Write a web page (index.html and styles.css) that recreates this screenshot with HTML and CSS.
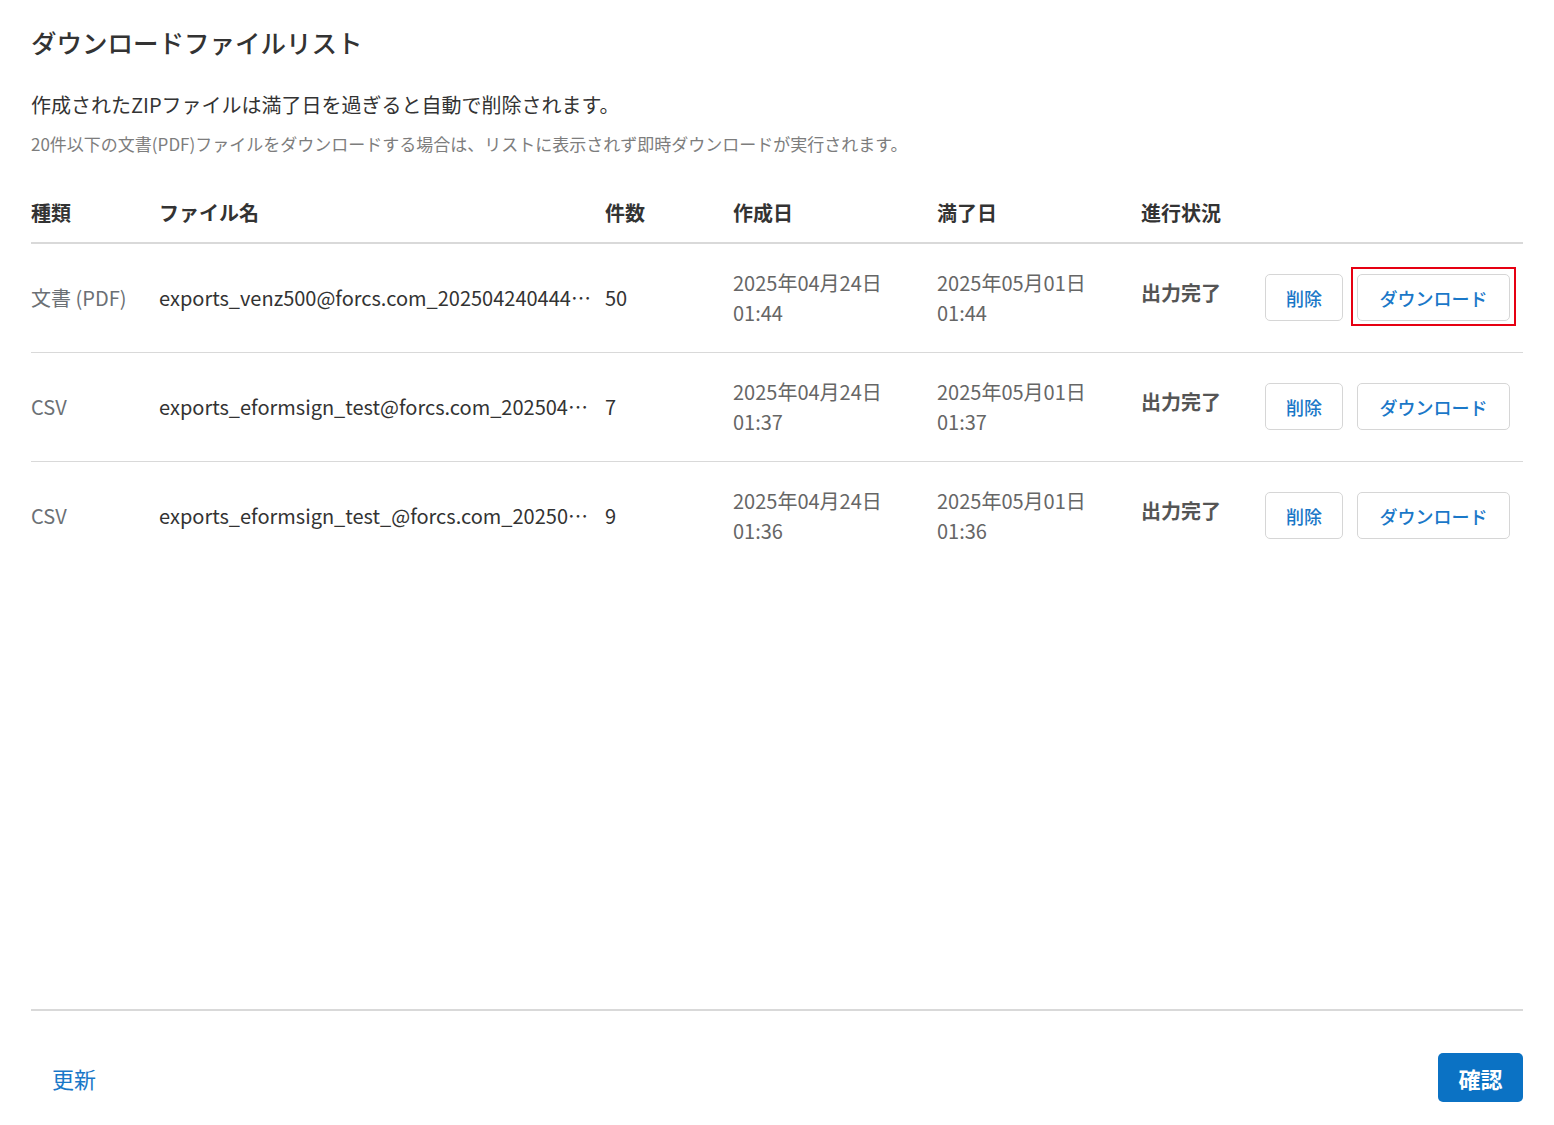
FILE: index.html
```html
<!DOCTYPE html>
<html lang="ja">
<head>
<meta charset="utf-8">
<title>ダウンロードファイルリスト</title>
<link rel="stylesheet" href="styles.css">
</head>
<body>
<div class="page">
  <div class="content">
    <h1 class="title">ダウンロードファイルリスト</h1>
    <p class="desc">作成されたZIPファイルは満了日を過ぎると自動で削除されます。</p>
    <p class="note">20件以下の文書(PDF)ファイルをダウンロードする場合は、リストに表示されず即時ダウンロードが実行されます。</p>
    <table class="list">
      <colgroup>
        <col class="c-type"><col class="c-name"><col class="c-count"><col class="c-date"><col class="c-date"><col class="c-status"><col class="c-act">
      </colgroup>
      <thead>
        <tr><th>種類</th><th>ファイル名</th><th>件数</th><th>作成日</th><th>満了日</th><th>進行状況</th><th></th></tr>
      </thead>
      <tbody>
        <tr>
          <td class="type">文書 (PDF)</td>
          <td class="name">exports_venz500@forcs.com_202504240444…</td>
          <td class="count">50</td>
          <td class="date">2025年04月24日<br>01:44</td>
          <td class="date">2025年05月01日<br>01:44</td>
          <td class="status">出力完了</td>
          <td class="act"><div class="btns"><button class="btn">削除</button><button class="btn dl focus">ダウンロード</button></div></td>
        </tr>
        <tr>
          <td class="type">CSV</td>
          <td class="name">exports_eformsign_test@forcs.com_202504…</td>
          <td class="count">7</td>
          <td class="date">2025年04月24日<br>01:37</td>
          <td class="date">2025年05月01日<br>01:37</td>
          <td class="status">出力完了</td>
          <td class="act"><div class="btns"><button class="btn">削除</button><button class="btn dl">ダウンロード</button></div></td>
        </tr>
        <tr>
          <td class="type">CSV</td>
          <td class="name">exports_eformsign_test_@forcs.com_20250…</td>
          <td class="count">9</td>
          <td class="date">2025年04月24日<br>01:36</td>
          <td class="date">2025年05月01日<br>01:36</td>
          <td class="status">出力完了</td>
          <td class="act"><div class="btns"><button class="btn">削除</button><button class="btn dl">ダウンロード</button></div></td>
        </tr>
      </tbody>
    </table>
  </div>
  <div class="footer">
    <button class="link">更新</button>
    <button class="primary">確認</button>
  </div>
</div>
</body>
</html>
```

FILE: styles.css
```css
* { box-sizing: border-box; }
html, body { margin: 0; padding: 0; background: #fff; }
body {
  font-family: "Noto Sans CJK JP", "Noto Sans", sans-serif;
  color: #333;
}
.page {
  width: 1554px;
  height: 1125px;
  padding: 0 31px;
  display: flex;
  flex-direction: column;
}
.content { flex: 1; }
.title {
  margin: 24px 0 0;
  font-size: 25.5px;
  font-weight: 500;
  line-height: 36px;
  color: #333;
}
.desc {
  margin: 31px 0 0;
  font-size: 20px;
  line-height: 28px;
  color: #333;
}
.note {
  margin: 13px 0 0;
  font-size: 17px;
  line-height: 24px;
  color: #7d7d7d;
}
.list {
  width: 100%;
  margin-top: 31px;
  border-collapse: collapse;
  table-layout: fixed;
}
.c-type { width: 128px; }
.c-name { width: 446px; }
.c-count { width: 128px; }
.c-date { width: 204px; }
.c-status { width: 124px; }
.list th {
  text-align: left;
  font-size: 20px;
  font-weight: 700;
  color: #333;
  height: 56px;
  padding: 0 0 4px;
  border-bottom: 2px solid #d9d9d9;
}
.list td {
  height: 109px;
  padding: 0;
  vertical-align: middle;
  font-size: 20px;
  line-height: 30px;
  border-bottom: 1px solid #d9d9d9;
  white-space: nowrap;
}
.list tbody tr:last-child td { border-bottom: none; }
.type { color: #6b7075; }
.name { color: #333; }
.count { color: #333; }
.date { color: #666; }
.list td.status {
  color: #555;
  font-weight: 700;
  font-size: 20px;
  padding-bottom: 10px;
}
.btns { display: flex; gap: 14px; }
.btn {
  position: relative;
  height: 47px;
  padding: 0 20px;
  background: #fff;
  border: 1px solid #d6d6d6;
  border-radius: 5px;
  font-family: inherit;
  font-size: 18px;
  font-weight: 500;
  color: #1a78c8;
  cursor: pointer;
}
.btn.dl { width: 153px; }
.btn.focus::after {
  content: "";
  position: absolute;
  top: -8px;
  bottom: -6px;
  left: -7px;
  right: -7px;
  border: 2px solid #e60012;
}
.footer {
  border-top: 2px solid #d9d9d9;
  height: 116px;
  display: flex;
  align-items: center;
  justify-content: space-between;
  padding: 0 0 0 21px;
}
.link {
  background: none;
  border: none;
  padding: 0;
  font-family: inherit;
  font-size: 22px;
  color: #1a78c8;
  cursor: pointer;
  margin-top: 19px;
}
.primary {
  width: 85px;
  height: 49px;
  background: #0b72c4;
  border: none;
  border-radius: 5px;
  color: #fff;
  font-family: inherit;
  font-size: 22px;
  font-weight: 700;
  cursor: pointer;
  margin-top: 19px;
}
```
